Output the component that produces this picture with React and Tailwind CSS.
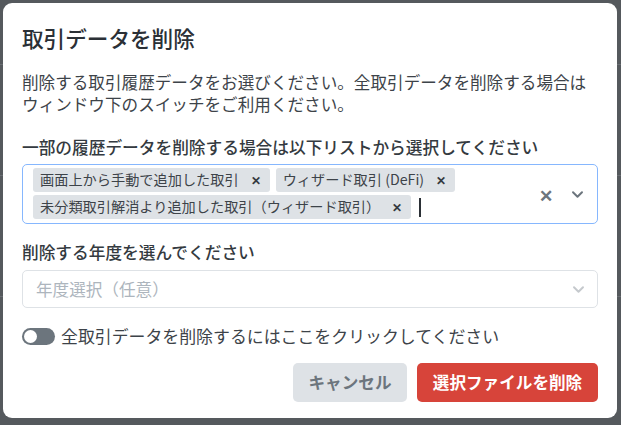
import React, { useState } from 'react';

const Tag = ({ label }) => (
  <span className="flex items-center h-[24px] bg-[#dee2e6] rounded-[3px] pl-[7px] pr-[9px] text-[14.2px] text-[#3d4349]">
    <span className="whitespace-nowrap">{label}</span>
    <span className="ml-[12px] text-[12px] font-bold text-[#343a40] leading-none">✕</span>
  </span>
);

const App = () => {
  const [allData, setAllData] = useState(false);

  return (
    <div
      className="relative w-[621px] h-[425px] overflow-hidden bg-[#55595d]"
      style={{ fontFamily: '"Noto Sans CJK JP", "Noto Sans", sans-serif' }}
    >
      {/* page behind the backdrop */}
      <div className="absolute inset-0 opacity-40">
        <div className="mt-[64px] h-px bg-[#8a8f94]" />
        <div className="mt-[110px] h-px bg-[#8a8f94]" />
        <div className="mt-[120px] h-px bg-[#8a8f94]" />
      </div>

      {/* modal */}
      <div className="absolute left-[3px] top-[3px] w-[614px] h-[415px] bg-white rounded-[9px] px-[19px] pt-[21px] text-[#343a40]">
        <h2 className="text-[21.6px] font-medium leading-[28px] text-[#2b3036]">取引データを削除</h2>

        <p className="mt-[19px] text-[16.6px] leading-[22px] text-[#3d4349]">
          削除する取引履歴データをお選びください。全取引データを削除する場合は
          <br />
          ウィンドウ下のスイッチをご利用ください。
        </p>

        <div className="mt-[20px] text-[16.7px] leading-[24px] font-medium">
          一部の履歴データを削除する場合は以下リストから選択してください
        </div>
        <div className="mt-[5px] flex items-center h-[60px] border border-[#86b7fe] rounded-[5px] pl-[10px] pr-[12px]">
          <div className="flex flex-wrap gap-x-[6px] gap-y-[3px] flex-1 pr-[60px]">
            <Tag label="画面上から手動で追加した取引" />
            <Tag label="ウィザード取引 (DeFi)" />
            <Tag label="未分類取引解消より追加した取引（ウィザード取引）" />
            <span className="ml-[2px] my-[3px] w-[2px] h-[19px] bg-[#2b3036]" />
          </div>
          <span className="text-[17px] font-bold text-[#6c757d] leading-none">✕</span>
          <svg className="ml-[17px]" width="15" height="15" viewBox="0 0 20 20">
            <path d="M4 7l6 6 6-6" fill="none" stroke="#6c757d" strokeWidth="2.6" strokeLinecap="round" strokeLinejoin="round" />
          </svg>
        </div>

        <div className="mt-[16px] text-[16.7px] leading-[24px] font-medium">削除する年度を選んでください</div>
        <div className="mt-[6px] flex items-center justify-between h-[38px] border border-[#dee2e6] rounded-[5px] pl-[13px] pr-[11px]">
          <span className="text-[16.6px] text-[#adb5bd]">年度選択（任意）</span>
          <svg width="15" height="15" viewBox="0 0 20 20">
            <path d="M4 7l6 6 6-6" fill="none" stroke="#c5c9cd" strokeWidth="2.6" strokeLinecap="round" strokeLinejoin="round" />
          </svg>
        </div>

        <label className="mt-[16px] flex items-center h-[24px] cursor-pointer">
          <button
            onClick={() => setAllData(!allData)}
            className={`flex items-center w-[33px] h-[17px] rounded-full px-[2px] ${allData ? 'bg-[#0d6efd] justify-end' : 'bg-[#6c757d] justify-start'}`}
          >
            <span className="w-[13px] h-[13px] rounded-full bg-white" />
          </button>
          <span className="ml-[6px] text-[16.9px] text-[#3d4349]">全取引データを削除するにはここをクリックしてください</span>
        </label>

        <div className="mt-[15px] flex justify-end gap-[10px]">
          <button className="h-[39px] w-[114px] rounded-[5px] bg-[#dee2e6] text-[16.6px] font-bold text-[#6c757d]">
            キャンセル
          </button>
          <button className="h-[39px] w-[181px] rounded-[5px] bg-[#d7443a] text-[16.6px] font-bold text-white">
            選択ファイルを削除
          </button>
        </div>
      </div>
    </div>
  );
};

export default App;
